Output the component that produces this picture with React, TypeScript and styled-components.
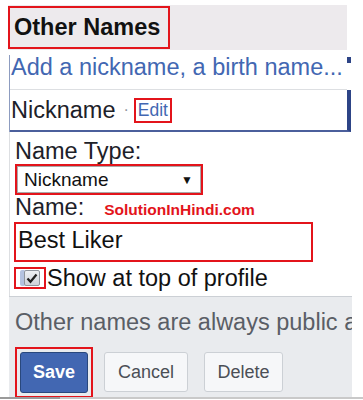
import React from "react";
import styled, { createGlobalStyle } from "styled-components";

const RED = "#e3141b";
const BLUE = "#4267b2";

const GlobalStyle = createGlobalStyle`
  body {
    margin: 0;
    background: #fff;
    font-family: "Liberation Sans", Arial, sans-serif;
    color: #1d2129;
  }
`;

export default function App() {
  return (
    <>
      <GlobalStyle />
      <Page>
        <Header>
          <TitleBox>Other Names</TitleBox>
        </Header>
        <List>
          <AddRow>
            Add a nickname, a birth name...
            <ScrollMark />
          </AddRow>
          <NickRow>
            <span>Nickname</span>
            <Dot>·</Dot>
            <EditBox>Edit</EditBox>
          </NickRow>
        </List>
        <Form>
          <Label>Name Type:</Label>
          <RedFrame $width={188} $height={31} $pad={0}>
            <SelectBox>
              <span>Nickname</span>
              <Arrow>▼</Arrow>
            </SelectBox>
          </RedFrame>
          <NameLine>
            <Label>Name:</Label>
            <Watermark>SolutionInHindi.com</Watermark>
          </NameLine>
          <InputBox>Best Liker</InputBox>
          <CheckRow>
            <CheckFrame>
              <CheckBox>
                <svg width="12" height="11" viewBox="0 0 12 11">
                  <path d="M1.5 5.5 L4.5 8.8 L10.5 1.5" fill="none" stroke="#222" strokeWidth="2.2" />
                </svg>
              </CheckBox>
            </CheckFrame>
            <CheckLabel>Show at top of profile</CheckLabel>
          </CheckRow>
        </Form>
        <Footer>
          <Note>Other names are always public and help people find you.</Note>
          <Buttons>
            <RedFrame $width={78} $height={51} $pad={3}>
              <PrimaryButton>Save</PrimaryButton>
            </RedFrame>
            <Button $width={84} $gap={11}>Cancel</Button>
            <Button $width={79} $gap={16}>Delete</Button>
          </Buttons>
        </Footer>
        <BottomRule />
      </Page>
    </>
  );
}

const Page = styled.div`
  width: 363px;
  height: 400px;
  overflow: hidden;
  padding-top: 5px;
  box-sizing: border-box;
`;

const Header = styled.div`
  margin-left: 8px;
  width: 339px;
  height: 45px;
  padding-top: 1px;
  box-sizing: border-box;
  background: #edeaed;
`;

const TitleBox = styled.div`
  display: flex;
  align-items: center;
  width: 162px;
  height: 43px;
  box-sizing: border-box;
  border: 2px solid ${RED};
  padding-left: 4px;
  font-size: 23.5px;
  font-weight: bold;
  color: #111;
`;

const List = styled.div`
  margin: 5px 0 0 9px;
  width: 342px;
  border-left: 1px solid #8d9cc0;
  box-sizing: border-box;
`;

const AddRow = styled.div`
  position: relative;
  height: 34px;
  padding-left: 1px;
  line-height: 24px;
  font-size: 23.5px;
  color: ${BLUE};
  white-space: nowrap;
  border-bottom: 1px solid #dddfe2;
  margin-right: 4px;
`;

const ScrollMark = styled.span`
  position: absolute;
  right: -4px;
  top: 2px;
  width: 4px;
  height: 6px;
  background: #2d4486;
`;

const NickRow = styled.div`
  display: flex;
  align-items: center;
  height: 40px;
  padding-left: 1px;
  font-size: 23.5px;
  border-right: 4px solid #2d4486;
  border-bottom: 2px solid #4b5f9c;
  color: #1d2129;
`;

const Dot = styled.span`
  margin: 0 5px 0 8px;
  font-size: 16px;
  color: #90949c;
`;

const EditBox = styled.span`
  display: flex;
  align-items: center;
  height: 25px;
  box-sizing: border-box;
  border: 2px solid ${RED};
  padding: 0 2px;
  font-size: 17.5px;
  color: ${BLUE};
`;

const Form = styled.div`
  margin-left: 9px;
  width: 343px;
  box-sizing: border-box;
  border-left: 1px solid #dddfe2;
  padding: 7px 0 7px 5px;
`;

const Label = styled.div`
  font-size: 23.5px;
  line-height: 24px;
  color: #1d2129;
`;

const RedFrame = styled.div<{ $width: number; $height: number; $pad: number }>`
  width: ${(p) => p.$width}px;
  height: ${(p) => p.$height}px;
  padding: ${(p) => p.$pad}px;
  box-sizing: border-box;
  border: 2px solid ${RED};
  margin-top: 1px;
`;

const SelectBox = styled.div`
  display: flex;
  align-items: center;
  justify-content: space-between;
  height: 100%;
  box-sizing: border-box;
  border: 1px solid #a9a9a9;
  padding: 0 7px 0 6px;
  font-size: 19px;
  color: #111;
`;

const Arrow = styled.span`
  font-size: 12px;
`;

const NameLine = styled.div`
  display: flex;
  align-items: baseline;
`;

const Watermark = styled.span`
  margin-left: 20px;
  font-size: 15.5px;
  font-weight: bold;
  color: ${RED};
`;

const InputBox = styled.div`
  display: flex;
  align-items: center;
  margin: 3px 0 0 -1px;
  width: 299px;
  height: 40px;
  box-sizing: border-box;
  border: 2px solid ${RED};
  padding: 0 0 3px 2px;
  font-size: 23.5px;
  color: #111;
`;

const CheckRow = styled.div`
  display: flex;
  align-items: center;
  margin: 5px 0 0 -1px;
`;

const CheckFrame = styled.div`
  display: flex;
  align-items: center;
  justify-content: flex-end;
  width: 32px;
  height: 22px;
  box-sizing: border-box;
  border: 2px solid ${RED};
  padding-right: 4px;
`;

const CheckBox = styled.span`
  display: flex;
  align-items: center;
  justify-content: center;
  width: 16px;
  height: 16px;
  box-sizing: border-box;
  border: 1px solid #8f959e;
  border-radius: 2px;
  background: linear-gradient(#eef0f4, #cfd3da);
  box-shadow: -4px 0 0 #b4c2e0;
`;

const CheckLabel = styled.span`
  margin-left: 1px;
  font-size: 23.5px;
  line-height: 22px;
  color: #111;
`;

const Footer = styled.div`
  margin-left: 9px;
  width: 343px;
  height: 101px;
  box-sizing: border-box;
  border-top: 1px solid #ccd0d5;
  background: #e9ebee;
  padding: 13px 0 0 6px;
  overflow: hidden;
`;

const Note = styled.div`
  font-size: 23.5px;
  line-height: 24px;
  color: #5a5e66;
  white-space: nowrap;
`;

const Buttons = styled.div`
  display: flex;
  align-items: flex-start;
  margin-top: 12px;
`;

const PrimaryButton = styled.div`
  display: flex;
  align-items: center;
  justify-content: center;
  height: 41px;
  box-sizing: border-box;
  border: 1px solid #29487d;
  border-radius: 3px;
  background: ${BLUE};
  color: #fff;
  font-size: 18px;
  font-weight: bold;
`;

const Button = styled.div<{ $width: number; $gap: number }>`
  display: flex;
  align-items: center;
  justify-content: center;
  width: ${(p) => p.$width}px;
  height: 40px;
  margin: 6px 0 0 ${(p) => p.$gap}px;
  box-sizing: border-box;
  border: 1px solid #ccd0d5;
  border-radius: 3px;
  background: #f6f7f9;
  color: #4b4f56;
  font-size: 18px;
`;

const BottomRule = styled.div`
  height: 2px;
  background: linear-gradient(90deg, #9a9a9a 0, #9a9a9a 60px, #c9c9c9 60px);
`;
